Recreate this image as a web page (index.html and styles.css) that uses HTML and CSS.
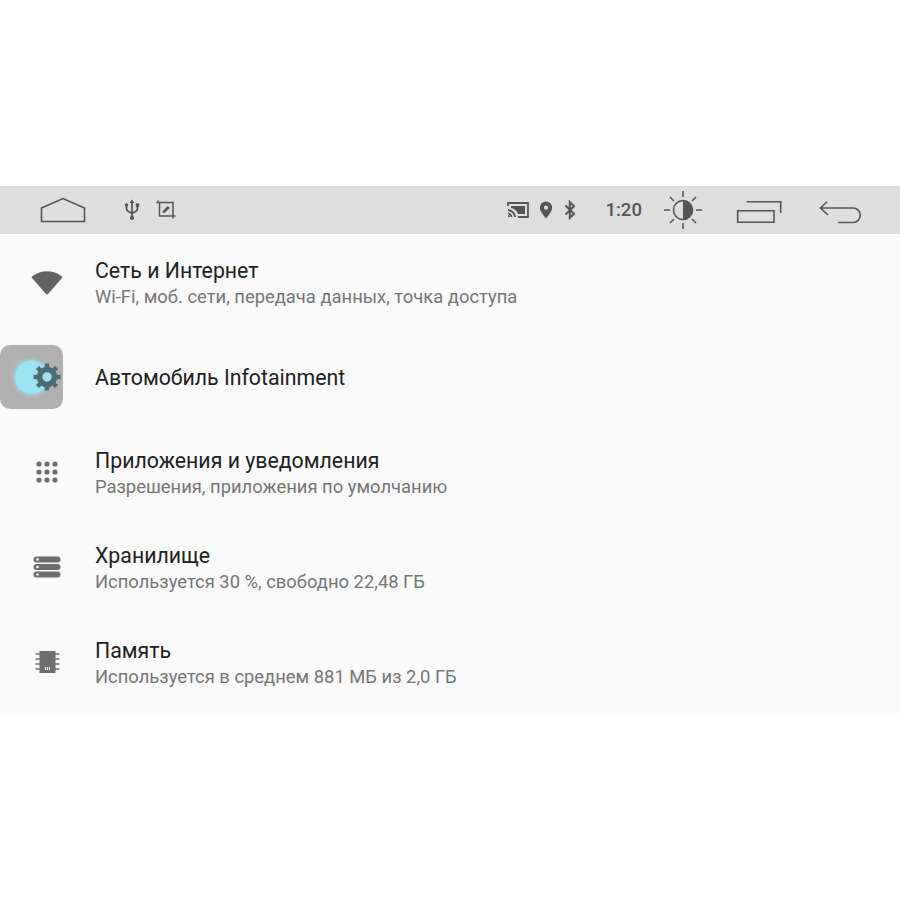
FILE: index.html
```html
<!DOCTYPE html>
<html lang="en">

<head>
  <meta charset="UTF-8">
  <title>Настройки</title>
  <link rel="stylesheet" href="styles.css">
</head>

<body>
  <div class="screen">
    <!--status bar-->
    <div class="bar">
      <svg class="home" width="46" height="26" viewBox="0 0 46 26"><path d="M1.5 11 L23 1.5 L44.5 11 V24.5 H1.5 Z" fill="none" stroke="#555" stroke-width="1.6"/></svg>
      <svg class="usb" width="16" height="22" viewBox="0 0 16 22"><path d="M8 3 V19 M2.5 6 V9.5 Q2.5 11.5 4.5 12.5 L8 14.5 L11.5 12.5 Q13.5 11.5 13.5 9.5 V6" fill="none" stroke="#555" stroke-width="1.7"/><path d="M8 0.5 L10.5 4 H5.5 Z" fill="#555"/><circle cx="8" cy="19" r="2" fill="#555"/><circle cx="2.5" cy="6" r="1.7" fill="#555"/><rect x="11.8" y="4.4" width="3.4" height="3.4" fill="#555"/></svg>
      <svg class="crop" width="20" height="20" viewBox="0 0 20 20"><path d="M2 0.5 V2.5 M0.5 2.5 H17 V16 M3.5 2.5 V16 H19.5 M17 16 V18.5" fill="none" stroke="#555" stroke-width="1.5"/><path d="M6.5 13 L7 10.8 L11.8 6 L13.8 8 L9 12.6 Z" fill="#555"/></svg>
      <div class="spacer"></div>
      <svg class="cast" width="22" height="18" viewBox="0 0 22 18"><path d="M1 5 V2 H21 V16 H11" fill="none" stroke="#555" stroke-width="1.8"/><path d="M4 5 H18 V13 H11 A9 9 0 0 0 4 7 Z" fill="#555"/><path d="M1 8 A9 9 0 0 1 9 16 H7.2 A7.2 7.2 0 0 0 1 10 Z M1 11.5 A5.5 5.5 0 0 1 5.5 16 H3.8 A4 4 0 0 0 1 13.2 Z M1 14 A2.2 2.2 0 0 1 3 16 H1 Z" fill="#555"/></svg>
      <svg class="pin" width="14" height="18" viewBox="0 0 14 18"><path fill-rule="evenodd" d="M7 0.5 A6.2 6.2 0 0 1 13.2 6.7 C13.2 10.5 9 14.5 7 17.5 C5 14.5 0.8 10.5 0.8 6.7 A6.2 6.2 0 0 1 7 0.5 Z M7 4.6 A2.1 2.1 0 1 0 7 8.8 A2.1 2.1 0 1 0 7 4.6 Z" fill="#555"/></svg>
      <svg class="bt" width="12" height="20" viewBox="0 0 12 20"><path d="M1.5 5.5 L10 13.8 L5.8 18 V2 L10 6.2 L1.5 14.5" fill="none" stroke="#555" stroke-width="2"/></svg>
      <span class="time">1:20</span>
      <svg class="bright" width="40" height="40" viewBox="0 0 40 40"><circle cx="20" cy="20" r="9.5" fill="none" stroke="#555" stroke-width="1.6"/><path d="M20 10.5 A9.5 9.5 0 0 1 20 29.5 Z" fill="#555"/><path d="M20 1 V7 M20 33 V39 M1 20 H7 M33 20 H39 M7 7 L11 11 M33 7 L29 11 M7 33 L11 29 M33 33 L29 29" stroke="#555" stroke-width="1.6"/></svg>
      <svg class="recent" width="46" height="28" viewBox="0 0 46 28"><path d="M1.7 14.7 H38 V26.3 H1.7 Z M10.7 5.7 H44.7 V17" fill="none" stroke="#555" stroke-width="1.6"/></svg>
      <svg class="back" width="43" height="32" viewBox="0 0 43 32"><path d="M8 7.7 L1.5 14 L9 21 M1.5 14 H34 A7.25 7.25 0 0 1 34 28.5 H19" fill="none" stroke="#555" stroke-width="1.6"/></svg>
    </div>

    <!--settings list-->
    <ul class="list">
      <li class="row first">
        <div class="ico">
          <svg width="32" height="25" viewBox="0 0 32 25"><path d="M1 8 Q0.3 7 1.3 6.2 A24 24 0 0 1 30.7 6.2 Q31.7 7 31 8 L17.2 23.8 Q16 25 14.8 23.8 Z" fill="#636363"/></svg>
        </div>
        <div class="text">
          <div class="title">Сеть и Интернет</div>
          <div class="sub">Wi-Fi, моб. сети, передача данных, точка доступа</div>
        </div>
      </li>
      <li class="row single">
        <div class="tile">
          <span class="glow"></span>
          <svg class="gear" width="30" height="30" viewBox="0 0 30 30"><circle cx="15" cy="15" r="7.5" fill="#a8dde8" stroke="#4a6d78" stroke-width="5.5"/><path d="M15 1.5 V28.5 M1.5 15 H28.5 M5.5 5.5 L24.5 24.5 M24.5 5.5 L5.5 24.5" stroke="#4a6d78" stroke-width="4.5" stroke-dasharray="5 17"/></svg>
        </div>
        <div class="text">
          <div class="title">Автомобиль Infotainment</div>
        </div>
      </li>
      <li class="row apps">
        <div class="ico">
          <svg width="22" height="22" viewBox="0 0 22 22" fill="#6e6e6e">
            <circle cx="3" cy="3" r="2.6"/><circle cx="11" cy="3" r="2.6"/><circle cx="19" cy="3" r="2.6"/>
            <circle cx="3" cy="11" r="2.6"/><circle cx="11" cy="11" r="2.6"/><circle cx="19" cy="11" r="2.6"/>
            <circle cx="3" cy="19" r="2.6"/><circle cx="11" cy="19" r="2.6"/><circle cx="19" cy="19" r="2.6"/>
          </svg>
        </div>
        <div class="text">
          <div class="title">Приложения и уведомления</div>
          <div class="sub">Разрешения, приложения по умолчанию</div>
        </div>
      </li>
      <li class="row">
        <div class="ico">
          <svg width="28" height="22" viewBox="0 0 28 22" fill="#6e6e6e">
            <rect x="0.5" y="0.5" width="27" height="6" rx="3"/><rect x="0.5" y="8" width="27" height="6" rx="3"/><rect x="0.5" y="15.5" width="27" height="6" rx="3"/>
            <circle cx="4.5" cy="3.5" r="1.3" fill="#fafafa"/><circle cx="4.5" cy="11" r="1.3" fill="#fafafa"/><circle cx="4.5" cy="18.5" r="1.3" fill="#fafafa"/>
          </svg>
        </div>
        <div class="text">
          <div class="title">Хранилище</div>
          <div class="sub">Используется 30 %, свободно 22,48 ГБ</div>
        </div>
      </li>
      <li class="row">
        <div class="ico">
          <svg width="25" height="24" viewBox="0 0 25 24">
            <rect x="4.5" y="1" width="16" height="22" fill="#6e6e6e"/>
            <path d="M0.5 4 H24.5 M0.5 9 H24.5 M0.5 14 H24.5 M0.5 19 H24.5" stroke="#6e6e6e" stroke-width="1.6"/>
            <path d="M10.5 17 V20 M12.5 17 V20 M14.5 17 V20" stroke="#fafafa" stroke-width="1.1"/>
          </svg>
        </div>
        <div class="text">
          <div class="title">Память</div>
          <div class="sub">Используется в среднем 881 МБ из 2,0 ГБ</div>
        </div>
      </li>
    </ul>
  </div>
</body>

</html>
```

FILE: styles.css
```css
* {
  margin: 0;
  padding: 0;
  box-sizing: border-box;
}

ul {
  list-style: none;
}

body {
  background-color: #fff;
  font-family: Roboto, "Liberation Sans", sans-serif;
  padding-top: 186px;
}

.screen {
  width: 900px;
  height: 527px;
  background-color: #fafafa;
}

.bar {
  height: 48px;
  background-color: #dedede;
  display: flex;
  align-items: center;
  padding-left: 40px;
}

.bar svg {
  flex: none;
}

.usb {
  margin-left: 38px;
}

.crop {
  margin-left: 16px;
}

.spacer {
  flex: 1;
}

.pin {
  margin-left: 10px;
}

.bt {
  margin-left: 11px;
}

.time {
  margin-left: 29px;
  font-size: 18.6px;
  color: #555;
  font-weight: 500;
}

.bright {
  margin-left: 21px;
}

.recent {
  margin-left: 33px;
}

.back {
  margin-left: 37px;
  margin-right: 38px;
}

.row {
  height: 95px;
  display: flex;
  align-items: center;
}

.row.first {
  height: 96px;
}

.row.single {
  height: 94px;
}

.ico {
  width: 95px;
  flex: none;
  display: flex;
  justify-content: center;
  padding-right: 1px;
}

.tile {
  width: 63px;
  height: 64px;
  margin-right: 32px;
  flex: none;
  background-color: #b0b0b0;
  border-radius: 10px;
  position: relative;
}

.glow {
  position: absolute;
  left: 15px;
  top: 16px;
  width: 33px;
  height: 33px;
  border-radius: 50%;
  background-color: #9be2f2;
  box-shadow: 0 0 4px 1px #9be2f2;
}

.gear {
  position: absolute;
  left: 32px;
  top: 17px;
}

.title {
  font-size: 21.3px;
  line-height: 30px;
  padding-top: 1px;
  color: #212121;
}

.sub {
  font-size: 18.4px;
  line-height: 24px;
  margin-top: -1px;
  color: #757575;
}
```
